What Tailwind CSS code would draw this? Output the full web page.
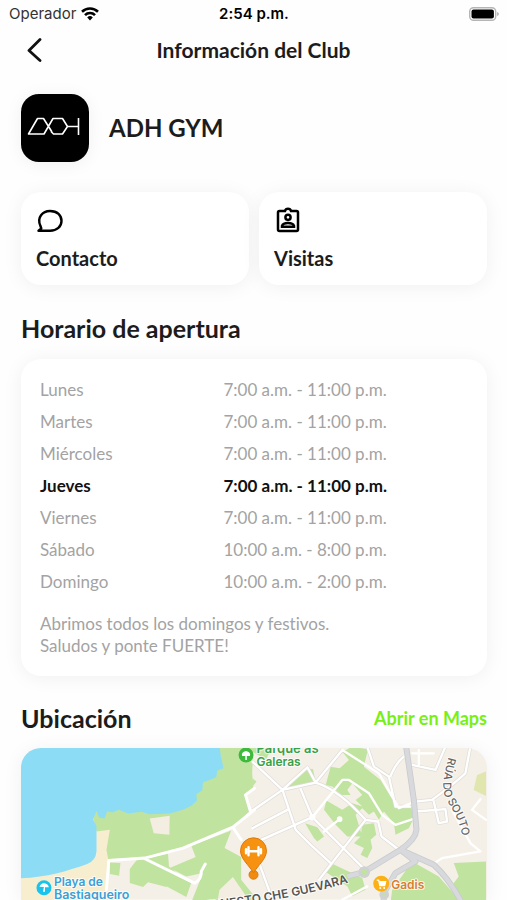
<!DOCTYPE html>
<html lang="es">
<head>
<meta charset="utf-8">
<meta name="viewport" content="width=device-width, initial-scale=1">
<title>Información del Club</title>
<script src="https://cdn.jsdelivr.net/npm/@tailwindcss/browser@4"></script>
</head>
<body class="bg-[#fefefe] font-['Lato',sans-serif] text-[#1c1c1c] [font-variant-ligatures:none]">
<div class="grid h-7 grid-cols-3 items-center pr-2 pl-[9px] font-['Inter',sans-serif] text-[15px]">
  <div class="flex items-center gap-1 text-[#333]">
    <span>Operador</span>
    <svg class="h-[14px] w-[20px]" viewBox="0 0 18 14" fill="none" stroke="#000" stroke-width="2.6" aria-hidden="true"><path d="M1 4.8a11.5 11.5 0 0 1 16 0"/><path d="M4 8.1a7 7 0 0 1 10 0"/><path d="M9 13.4 6.2 10.4a4 4 0 0 1 5.6 0Z" fill="#000" stroke="none"/></svg>
  </div>
  <span class="text-center font-semibold whitespace-nowrap text-black">2:54 p.m.</span>
  <svg class="h-[14px] w-[30px] justify-self-end" viewBox="0 0 30 14" aria-hidden="true"><rect x=".7" y=".7" width="26" height="12.6" rx="3.8" fill="#fff" stroke="#b5b5b5" stroke-width="1.4"/><rect x="2.5" y="2.5" width="22.4" height="9" rx="2" fill="#000"/><path d="M28.2 5v4q1.6-.6 1.6-2t-1.6-2" fill="#aaa"/></svg>
</div>
<header class="grid h-11 grid-cols-[48px_1fr_48px] items-center">
  <button class="flex justify-end" aria-label="Volver"><svg class="size-6" viewBox="0 0 24 24" fill="none" stroke="#111" stroke-width="2.8" stroke-linecap="round" stroke-linejoin="round"><path d="M16 1.500 5 12.500 16 22.500"/></svg></button>
  <h1 class="text-center text-[21px] font-bold">Información del Club</h1>
</header>
<main class="pr-5 pl-[21px]">
  <section class="mt-[22px] flex items-center gap-5">
    <svg class="size-[68px] rounded-[18px] bg-black shadow-[0_2px_18px_rgba(0,0,0,0.06)]" viewBox="0 0 68 68" fill="none" stroke="#fff" stroke-width="1.600" stroke-linejoin="round" role="img" aria-label="ADH"><path d="M31 38 22.500 24.500H16.500L7.500 40H23L32 24.500H41.500L46.500 32.500 41.500 40H32.500L30 37.500M46.500 32.500H57.500M57.500 24V41"/></svg>
    <h2 class="text-2xl font-bold">ADH GYM</h2>
  </section>
  <nav class="mt-[30px] grid grid-cols-2 gap-2.5">
    <button class="flex h-[93px] flex-col items-start gap-[11px] rounded-[20px] bg-white px-[15px] pt-[15px] text-left shadow-[0_2px_20px_rgba(0,0,0,0.06)]">
      <svg class="size-7" viewBox="0 0 28 28" fill="none" stroke="#000" stroke-width="2.400" stroke-linejoin="round" aria-hidden="true"><path d="M2.500 23.800 5.300 21.500 4.300 18.500C.8 10.500 6.500 4 14 4S25.500 8.500 25.500 14 21 23.800 14 23.800Z"/></svg>
      <span class="text-xl leading-6 font-bold">Contacto</span>
    </button>
    <button class="flex h-[93px] flex-col items-start gap-[11px] rounded-[20px] bg-white px-[15px] pt-[15px] text-left shadow-[0_2px_20px_rgba(0,0,0,0.06)]">
      <svg class="size-7" viewBox="0 0 28 28" fill="none" stroke="#000" stroke-width="2.500" aria-hidden="true"><path d="M11 4H5.500Q4 4 4 5.500v17Q4 24 5.500 24h17q1.500 0 1.500-1.500v-17Q24 4 22.500 4H17q-.6-2.200-3-2.200T11 4Z"/><circle cx="14" cy="10.300" r="2.600"/><path d="M8 19.800v-1q1-2.800 6-2.800t6 2.800v1Z"/></svg>
      <span class="text-xl leading-6 font-bold">Visitas</span>
    </button>
  </nav>
  <h2 class="mt-[27px] text-[25px] leading-8 font-bold">Horario de apertura</h2>
  <section class="mt-[15px] rounded-[20px] bg-white px-[19px] pt-[15px] pb-[19px] text-[17px] text-[#a3a3a3] shadow-[0_2px_20px_rgba(0,0,0,0.06)]">
    <table class="w-full table-fixed text-left">
      <colgroup><col class="w-3/7"><col></colgroup>
      <tbody>
        <tr class="h-8"><th scope="row" class="font-normal">Lunes</th><td>7:00 a.m. - 11:00 p.m.</td></tr>
        <tr class="h-8"><th scope="row" class="font-normal">Martes</th><td>7:00 a.m. - 11:00 p.m.</td></tr>
        <tr class="h-8"><th scope="row" class="font-normal">Miércoles</th><td>7:00 a.m. - 11:00 p.m.</td></tr>
        <tr class="h-8 font-bold text-[#111]"><th scope="row">Jueves</th><td>7:00 a.m. - 11:00 p.m.</td></tr>
        <tr class="h-8"><th scope="row" class="font-normal">Viernes</th><td>7:00 a.m. - 11:00 p.m.</td></tr>
        <tr class="h-8"><th scope="row" class="font-normal">Sábado</th><td>10:00 a.m. - 8:00 p.m.</td></tr>
        <tr class="h-8"><th scope="row" class="font-normal">Domingo</th><td>10:00 a.m. - 2:00 p.m.</td></tr>
      </tbody>
    </table>
    <p class="mt-[15px] leading-[22px]">Abrimos todos los domingos y festivos.<br>Saludos y ponte FUERTE!</p>
  </section>
  <div class="mt-[26px] flex items-center justify-between">
    <h2 class="text-[25px] leading-8 font-bold">Ubicación</h2>
    <a href="#mapa" class="text-[18px] font-bold text-[#79ef16]">Abrir en Maps</a>
  </div>
  <div id="mapa" class="mt-[14px] overflow-hidden rounded-t-[20px] shadow-[0_2px_20px_rgba(0,0,0,0.06)]">
    <svg class="block w-full" viewBox="21 748 467 152" role="img" aria-label="Mapa de la ubicación del club">
      <rect x="21" y="748" width="467" height="152" fill="#f4f0e7"/>
      <!-- West side: bay, beach and coastal park -->
      <g transform="translate(0 740) scale(.33333)">
        <path d="M60 400 290 350 290 270 330 270 325 480 300 600H60Z" fill="#f6eecf"/>
        <path d="M650 20H762L758 100 762 150 735 165 752 212 700 262 550 325 435 355 325 358 320 330 330 270 290 275 278 225 300 200 500 200 600 140Z" fill="#c0e3a0"/>
        <path d="M60 20H660L664 50 672 85 653 92 650 112 610 128 608 152 590 162 592 182 575 198 550 210 510 221 450 223 425 216 385 221 357 210 338 218 322 214 314 236 298 233 290 213 280 238 290 260V335Q288 362 262 373C200 395 140 413 60 416Z" fill="#8cdcf6"/>
        <path d="M450 236 510 228 509 285 462 280Z" fill="#f3eee1"/>
        <path d="M330 368 362 370 358 408 330 403ZM390 388 410 362 505 342 508 380 530 398 500 442 445 428 430 442 390 430ZM525 405 575 430 560 472 500 440ZM575 318 695 272 675 325 725 352 725 420 765 470V560H560L578 480 610 400 560 410 510 385 588 352Z" fill="#c0e3a0"/>
        <path d="M660 450 700 412 740 470 750 560 640 560Z" fill="#f3eee1"/>
      </g>
      <!-- East side: parks between the streets -->
      <g transform="translate(253 740) scale(.33333)">
        <g fill="#c0e3a0">
          <path d="M0 20H60L40 60 0 35ZM0 115 12 125 0 140ZM98 142 165 85 182 88 190 128ZM270 35 300 20 347 28 335 80 385 120 415 170 440 205 475 190 485 235 470 265 430 285 425 250 395 215 380 240 365 215 350 225 330 205 310 225 330 290 285 290 250 255 215 210 222 182 270 210 300 190 330 200 310 180 330 165 300 130 285 150 295 165 265 165 240 140 220 135 235 80 262 85 290 60ZM158 250 195 262 215 290 195 305 185 295ZM330 255 365 250 372 285 355 300 360 325 345 355 325 345 335 325 305 310 325 290ZM218 395 235 370 330 415 340 450 300 470 285 440ZM480 365 560 410 630 490V600H400L420 450ZM605 370 702 365V600H640L605 430 620 410Z"/>
        </g>
        <path d="M665 150 675 105 702 95V168Z" fill="#e0e6ad"/>
        <g fill="none" stroke="#dfdcd8" stroke-width="11" stroke-linejoin="round">
          <path d="M0 212 90 150 190 128Q260 150 340 240L375 245M0 65 90 150 130 270 180 320 235 370M190 128 270 30M190 128 165 82 90 150M0 312 180 232M0 265 105 210M145 148 180 232 340 392M340 240 200 420M378 245 388 290 440 330M345 20 365 80 410 110 430 200 475 200M455 50Q430 70 415 108M490 185 540 180 600 135 640 100 655 20M490 215 580 208 585 245 560 250 545 185M480 75 550 90 580 20M20 370 60 480"/>
        </g>
        <g fill="none" stroke="#fff" stroke-width="7" stroke-linejoin="round" stroke-linecap="round">
          <path d="M0 212 90 150 190 128Q260 150 340 240L375 245M0 65 90 150 130 270 180 320 235 370M190 128 270 30 380 100 440 205 482 188M190 128 165 82 90 150M0 312 180 232 270 120 290 120 350 160 390 225 430 255 482 238M0 265 105 210M145 148 180 232 340 392M215 275 262 238M340 240 200 420M378 245 388 290 440 330M345 20 365 80 410 110 430 200 475 200M455 50Q430 70 415 108M490 185 540 180 600 135 640 100 655 20M490 215 580 208 585 245 560 250 545 185M480 75 550 90 580 20M480 40H545M500 30V75M20 370 60 480M600 210 655 310 685 335 570 355 540 375M702 240 660 210 685 178M270 480 345 440"/>
          <circle cx="180" cy="232" r="6"/><circle cx="262" cy="238" r="5"/>
        </g>
        <g fill="none" stroke="#c9cbce" stroke-width="18" stroke-linejoin="round">
          <path d="M462 20 485 180 493 270Q490 300 445 330L335 397 285 410M445 330 545 375Q590 415 630 490L660 600M445 330 490 365 430 400 395 460 390 600"/>
        </g>
        <g fill="none" stroke="#d8d9dc" stroke-width="13" stroke-linejoin="round">
          <path d="M462 20 485 180 493 270Q490 300 445 330L335 397 285 410M445 330 545 375Q590 415 630 490L660 600M445 330 490 365 430 400 395 460 390 600"/>
        </g>
        <circle cx="336" cy="397" r="13" fill="#c0e3a0" stroke="#cfd1d3" stroke-width="9"/>
        <circle cx="396" cy="465" r="10" fill="#c0e3a0" stroke="#cfd1d3" stroke-width="9"/>
      </g>
      <g transform="translate(0 740) scale(.33333)" fill="none" stroke="#fff" stroke-width="9" stroke-linecap="round" stroke-linejoin="round">
        <path d="M320 450 327 362 435 355 550 325 700 262 765 210M752 212 738 165 765 145M700 262 725 300M435 357 585 430Q605 420 605 395L617 373"/>
      </g>
      <g font-family="Inter, sans-serif" font-size="12" font-weight="600" stroke="#fff" stroke-opacity=".8" stroke-width="2" paint-order="stroke" stroke-linejoin="round">
        <text x="257" y="753" font-size="13" fill="#38a047">Parque as</text>
        <text x="257" y="766" fill="#38a047">Galeras</text>
        <text x="54" y="886" fill="#3aa0d8">Playa de</text>
        <text x="54" y="899" font-size="12.500" fill="#3aa0d8">Bastiagueiro</text>
        <text x="392" y="889" fill="#dc7c32">Gadis</text>
        <path id="souto" d="M449.500 757C445 775 441 789 448 801S460 818 464 840" fill="none" stroke="none"/>
        <text fill="#666" font-size="11" font-weight="500"><textPath href="#souto">RÚA DO SOUTO</textPath></text>
        <path id="guevara" d="M190 912Q280 903 349 883" fill="none" stroke="none"/>
        <text fill="#555" font-size="12" text-anchor="end"><textPath href="#guevara" startOffset="100%">ERNESTO CHE GUEVARA</textPath></text>
      </g>
      <circle cx="246.500" cy="755" r="7.500" fill="#3dba3b"/><path d="M242.500 756q-1-4 4-5 5 1 4 5Zm3.300 0h1.500v4h-1.500Z" fill="#fff"/>
      <circle cx="44" cy="888" r="7.500" fill="#18c4ee"/><path d="M39.500 887q1.500-4 5-3.500t4.500 4Zm4.500 0h1v5h-2Z" fill="#fff"/>
      <circle cx="382" cy="884" r="8" fill="#fbb016"/><path d="M377.500 880.500h2l1 5.500h5l1-4h-6" fill="#fff" stroke="#fff" stroke-width="1.200"/><circle cx="381" cy="888.300" r="1" fill="#fff"/><circle cx="385" cy="888.300" r="1" fill="#fff"/>
      <circle cx="254" cy="875" r="4.500" fill="#f08a10" stroke="#dc7911"/>
      <path d="M254 838a13 13 0 0 1 13 13c0 8-8 14-13 22-5-8-13-14-13-22a13 13 0 0 1 13-13Z" fill="#f6920f" stroke="#dc7911"/>
      <path d="M249 851.500h10M249 847.500v8M259 847.500v8M246.500 849.500v4M261.500 849.500v4" stroke="#fff" stroke-width="2.400" stroke-linecap="round"/>
    </svg>
  </div>
</main>
</body>
</html>
